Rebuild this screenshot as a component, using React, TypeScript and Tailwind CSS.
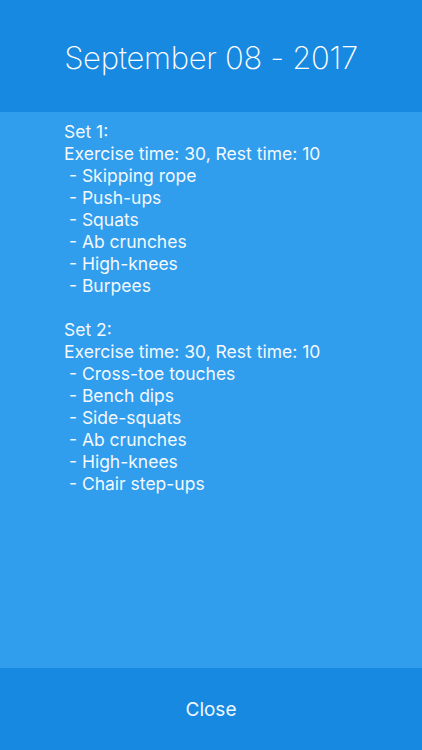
import React from "react";

const SETS = [
  {
    name: "Set 1:",
    info: "Exercise time: 30, Rest time: 10",
    items: ["Skipping rope", "Push-ups", "Squats", "Ab crunches", "High-knees", "Burpees"],
  },
  {
    name: "Set 2:",
    info: "Exercise time: 30, Rest time: 10",
    items: ["Cross-toe touches", "Bench dips", "Side-squats", "Ab crunches", "High-knees", "Chair step-ups"],
  },
];

const App: React.FC = () => {
  return (
    <div className="flex flex-col h-[750px] w-full text-white" style={{ fontFamily: "Inter, 'Liberation Sans', sans-serif" }}>
      {/* Cabecera */}
      <header className="h-[112px] shrink-0 bg-[#1889e1] flex items-center justify-center">
        <h1 className="text-[31px] font-extralight tracking-[-0.3px] leading-none pt-[3px]">September 08 - 2017</h1>
      </header>

      {/* Detalle */}
      <main className="flex-1 bg-[#309ded] pl-[64px] pt-[9px] text-[17.5px] leading-[22px] text-[#f3f9fe]">
        {SETS.map((set, i) => (
          <div key={set.name} className={i > 0 ? "mt-[22px]" : ""}>
            <p>{set.name}</p>
            <p>{set.info}</p>
            {set.items.map(item => (
              <p key={item} className="whitespace-pre">{` - ${item}`}</p>
            ))}
          </div>
        ))}
      </main>

      {/* Pie */}
      <footer className="h-[82px] shrink-0 bg-[#1889e1] flex items-center justify-center">
        <button className="text-[19px] text-[#eef7fe] pt-[2px]">Close</button>
      </footer>
    </div>
  );
};

export default App;
